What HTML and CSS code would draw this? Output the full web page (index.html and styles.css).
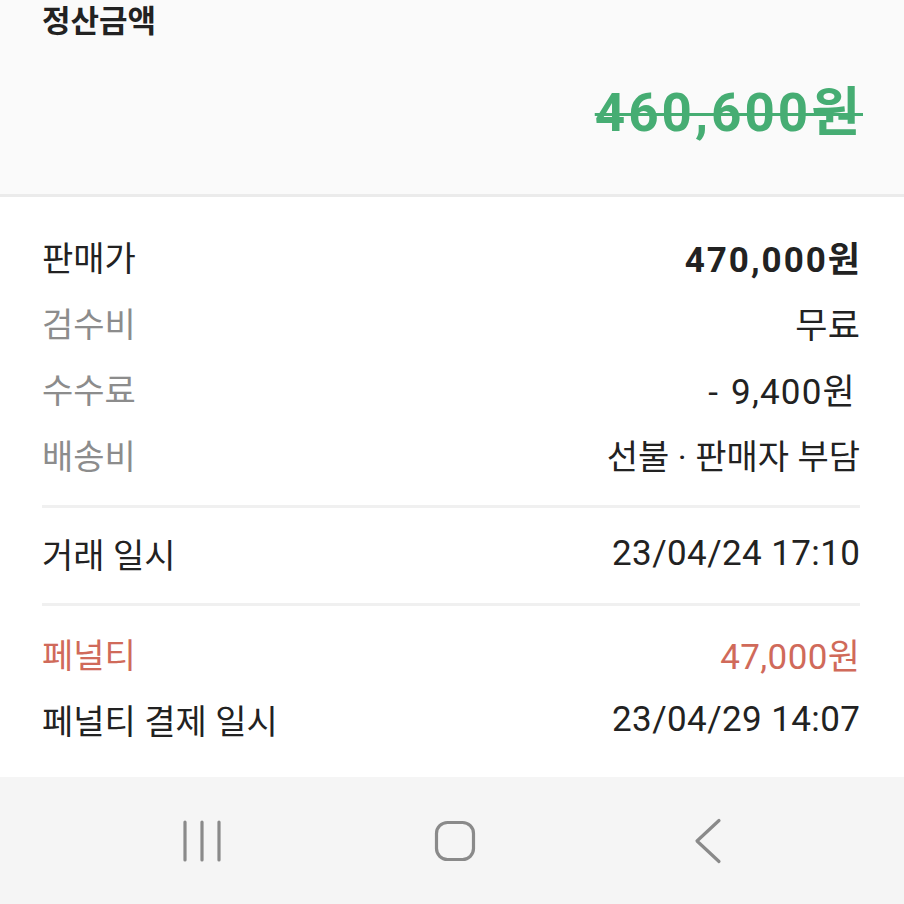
FILE: index.html
```html
<!DOCTYPE html>
<html lang="ko">
<head>
  <meta charset="UTF-8">
  <meta name="viewport" content="width=device-width, initial-scale=1.0">
  <title>정산 내역</title>
  <link rel="stylesheet" href="styles.css">
</head>
<body>
  <div class="summary">
    <h2 class="summary-title">정산금액</h2>
    <p class="summary-amount">460,600원</p>
  </div>

  <div class="details">
    <div class="row">
      <span class="label">판매가</span>
      <span class="value strong">470,000원</span>
    </div>
    <div class="row muted">
      <span class="label">검수비</span>
      <span class="value">무료</span>
    </div>
    <div class="row muted">
      <span class="label">수수료</span>
      <span class="value fee">- 9,400원</span>
    </div>
    <div class="row muted">
      <span class="label">배송비</span>
      <span class="value kr">선불 · 판매자 부담</span>
    </div>

    <div class="divider"></div>

    <div class="row">
      <span class="label">거래 일시</span>
      <span class="value">23/04/24 17:10</span>
    </div>

    <div class="divider"></div>

    <div class="row penalty">
      <span class="label">페널티</span>
      <span class="value">47,000원</span>
    </div>
    <div class="row">
      <span class="label">페널티 결제 일시</span>
      <span class="value">23/04/29 14:07</span>
    </div>
  </div>

  <nav class="navbar">
    <button class="nav-btn" aria-label="최근 앱">
      <svg width="44" height="44" viewBox="0 0 44 44">
        <line x1="4" y1="3" x2="4" y2="41" />
        <line x1="21" y1="3" x2="21" y2="41" />
        <line x1="38" y1="3" x2="38" y2="41" />
      </svg>
    </button>
    <button class="nav-btn" aria-label="홈">
      <svg width="44" height="44" viewBox="0 0 44 44">
        <rect x="3.5" y="3.5" width="37" height="37" rx="11" />
      </svg>
    </button>
    <button class="nav-btn" aria-label="뒤로">
      <svg width="44" height="44" viewBox="0 0 44 44">
        <polyline points="34,1.5 12,22 34,42.5" />
      </svg>
    </button>
  </nav>
</body>
</html>
```

FILE: styles.css
```css
body {
  margin: 0;
  width: 904px;
  font-family: 'Roboto', 'Noto Sans CJK KR', sans-serif;
  color: #222;
  background: #fff;
}
.summary {
  height: 197px;
  box-sizing: border-box;
  padding: 0 44px 0 42px;
  background: #fafafa;
  border-bottom: 3px solid #ebebeb;
}
.summary-title {
  margin: 0;
  font-size: 31px;
  line-height: 44px;
  font-weight: 700;
  color: #222;
}
.summary-amount {
  margin: 39px -3px 0 0;
  text-align: right;
  font-size: 53px;
  line-height: 60px;
  font-weight: 700;
  letter-spacing: 3px;
  color: #46ad73;
  text-decoration: line-through;
  text-decoration-thickness: 3px;
}
.details {
  padding: 26px 44px 25px 42px;
}
.row {
  height: 66px;
  display: flex;
  align-items: center;
  justify-content: space-between;
  font-size: 34px;
}
.value {
  font-size: 35px;
  letter-spacing: 0.4px;
  margin-right: -0.4px;
}
.value.kr {
  font-size: 34px;
  letter-spacing: 0;
  margin-right: 0;
}
.value.strong {
  font-weight: 700;
  letter-spacing: 2px;
  margin-right: -2px;
}
.value.fee {
  word-spacing: 2px;
  letter-spacing: 1.2px;
  margin-right: 4px;
}
.row.muted .label {
  color: #8c8c8c;
}
.row.penalty {
  color: #d06a5a;
}
.divider {
  height: 3px;
  background: #f0f0f0;
  margin: 18px 0 12px 0;
}
.divider + .row + .divider {
  margin: 17px 0 14px 0;
}
.navbar {
  height: 127px;
  background: #f5f5f5;
  display: flex;
  align-items: center;
  padding-left: 181px;
  gap: 208px;
}
.nav-btn {
  border: none;
  background: none;
  padding: 0;
  width: 44px;
  height: 44px;
  display: flex;
}
.nav-btn svg {
  overflow: visible;
  stroke: #8a8a8a;
  stroke-width: 3.2;
  stroke-linecap: round;
  stroke-linejoin: round;
  fill: none;
}
```
